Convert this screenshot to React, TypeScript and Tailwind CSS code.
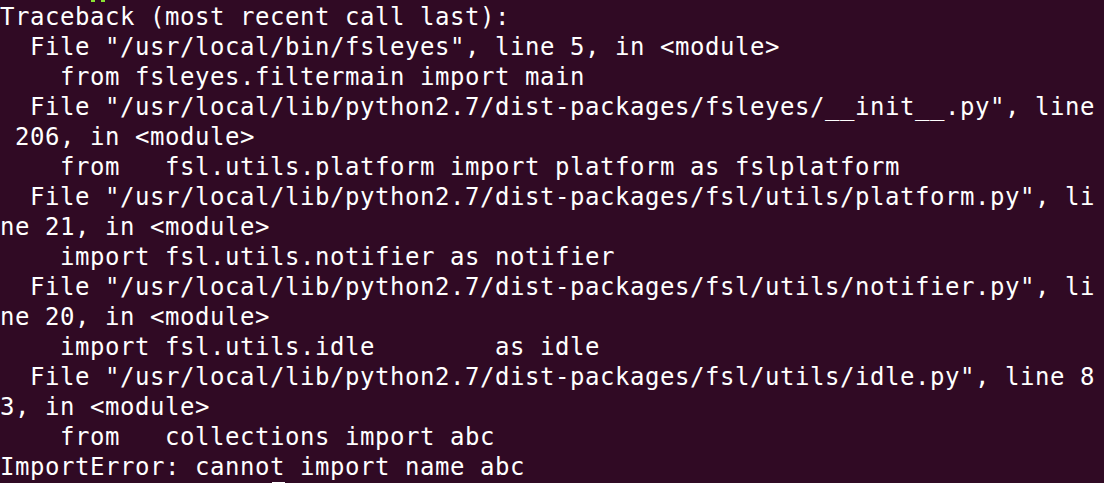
import React from 'react';

// Terminal output, 73 columns wide
const lines: string[] = [
  'Traceback (most recent call last):',
  '  File "/usr/local/bin/fsleyes", line 5, in <module>',
  '    from fsleyes.filtermain import main',
  '  File "/usr/local/lib/python2.7/dist-packages/fsleyes/__init__.py", line',
  ' 206, in <module>',
  '    from   fsl.utils.platform import platform as fslplatform',
  '  File "/usr/local/lib/python2.7/dist-packages/fsl/utils/platform.py", li',
  'ne 21, in <module>',
  '    import fsl.utils.notifier as notifier',
  '  File "/usr/local/lib/python2.7/dist-packages/fsl/utils/notifier.py", li',
  'ne 20, in <module>',
  '    import fsl.utils.idle        as idle',
  '  File "/usr/local/lib/python2.7/dist-packages/fsl/utils/idle.py", line 8',
  '3, in <module>',
  '    from   collections import abc',
];

export default function App() {
  return (
    <div className="relative w-[1104px] h-[483px] overflow-hidden bg-[#300a24] text-white">
      {/* tail of the prompt line above, mostly scrolled off */}
      <div className="absolute left-[91px] top-0 flex gap-[6px]">
        <span className="block w-[4px] h-[2px] bg-[#8ae234]" />
        <span className="block w-[4px] h-[2px] bg-[#8ae234]" />
      </div>
      <div className="pt-[2px] font-['DejaVu_Sans_Mono',monospace] text-[24px] leading-[30px] tracking-[0.55px] whitespace-pre">
        {lines.map((line, i) => (
          <div key={i}>{line}</div>
        ))}
        <div>
          ImportError: canno
          <span className="relative">
            t<span className="absolute left-[2px] bottom-[-5px] w-[13px] h-[4px] bg-white" />
          </span>{' '}
          import name abc
        </div>
      </div>
    </div>
  );
}
